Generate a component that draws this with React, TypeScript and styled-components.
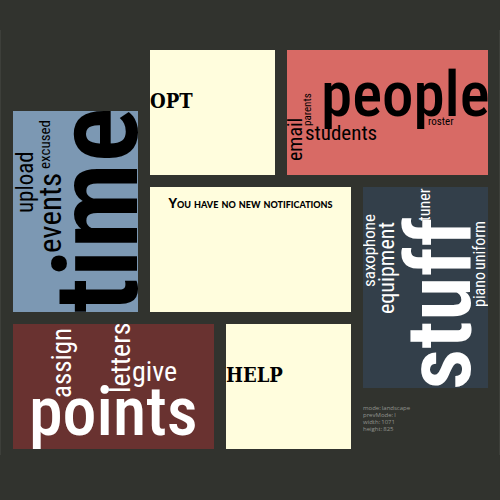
import React from 'react';
import styled, { createGlobalStyle } from 'styled-components';

const GlobalStyle = createGlobalStyle`
  *, *::before, *::after { box-sizing: border-box; }
  body {
    margin: 0;
    background: #31332e;
    color: #000;
  }
`;

const Page = styled.div`
  min-height: 100vh;
  padding: 30px 0 44px;
`;

const Board = styled.main`
  display: grid;
  grid-template-columns: 125fr 64fr 49fr 64fr 125fr;
  grid-template-rows:
    minmax(49px, auto) minmax(64px, auto) minmax(125px, auto)
    minmax(64px, auto) minmax(49px, auto);
  gap: 12px;
  padding: 20px 11px 6px 12px;
  border: solid #3d3f3a;
  border-width: 0 1px;
`;

const Cell = styled.div<{ $column: string; $row: string }>`
  grid-column: ${(p) => p.$column};
  grid-row: ${(p) => p.$row};
  min-width: 0;
`;

const CloudTile = styled(Cell)<{ $background: string; $ink: string }>`
  display: block;
  background: ${(p) => p.$background};
  fill: ${(p) => p.$ink};
  overflow: hidden;
`;

const Cloud = styled.svg`
  display: block;
  width: 100%;
  height: 100%;
  font-family: 'Roboto Condensed', 'Open Sans Condensed', 'Liberation Sans', sans-serif;
  font-variant-ligatures: none;
`;

const CloudWord = styled.text<{ $size: number; $weight: number }>`
  font-size: ${(p) => p.$size}px;
  font-weight: ${(p) => p.$weight};
`;

const NoteTile = styled(Cell)`
  display: flex;
  flex-direction: column;
  background: #fffddd;
  color: #000;
  font-family: 'DejaVu Serif Condensed', 'DejaVu Serif', serif;
  font-weight: 700;
  text-decoration: none;
`;

const NoteTitle = styled.span`
  margin-top: 39px;
  font-size: 20px;
  line-height: 24px;
`;

const Notice = styled.p`
  margin: 8px 0 0;
  font-family: Lato, 'Open Sans', sans-serif;
  font-weight: 900;
  font-size: 13px;
  line-height: 16px;
  text-align: center;
  font-variant-caps: small-caps;
`;

const Status = styled.dl`
  margin: 5px 0 0;
  color: #92938e;
  font-family: 'Open Sans', 'Noto Sans', sans-serif;
  font-size: 6px;
  line-height: 7px;
`;

const StatusLine = styled.div`
  display: flex;
  gap: 1px;

  dt, dd { margin: 0; }
`;

type Word = {
  text: string;
  x: number;
  y: number;
  size: number;
  weight?: number;
  upright?: boolean;
};

type CloudSpec = {
  name: string;
  column: string;
  row: string;
  width: number;
  height: number;
  background: string;
  ink: string;
  words: Word[];
};

const clouds: CloudSpec[] = [
  {
    name: 'time', column: '1', row: '2 / 4', width: 125, height: 201,
    background: '#7c98b3', ink: '#000',
    words: [
      { text: 'time', x: 124, y: 202, size: 116, weight: 600 },
      { text: 'upload', x: 20, y: 102, size: 23 },
      { text: 'events', x: 48, y: 142, size: 31 },
      { text: 'excused', x: 37, y: 58, size: 15 },
    ],
  },
  {
    name: 'people', column: '4 / 6', row: '1 / 3', width: 201, height: 125,
    background: '#d86a65', ink: '#000',
    words: [
      { text: 'people', x: 34, y: 66, size: 63, weight: 500, upright: true },
      { text: 'students', x: 18, y: 90, size: 21, upright: true },
      { text: 'roster', x: 141, y: 75, size: 11, upright: true },
      { text: 'email', x: 15, y: 111, size: 20 },
      { text: 'parents', x: 24, y: 76, size: 11 },
    ],
  },
  {
    name: 'stuff', column: '5', row: '3 / 5', width: 125, height: 201,
    background: '#333f4a', ink: '#fff',
    words: [
      { text: 'stuff', x: 107, y: 203, size: 91, weight: 600 },
      { text: 'tuner', x: 67, y: 34, size: 16 },
      { text: 'saxophone', x: 12, y: 100, size: 17 },
      { text: 'equipment', x: 31, y: 127, size: 22 },
      { text: 'piano', x: 122, y: 120, size: 16 },
      { text: 'uniform', x: 122, y: 83, size: 16 },
    ],
  },
  {
    name: 'points', column: '1 / 3', row: '4 / 6', width: 201, height: 125,
    background: '#693230', ink: '#fff',
    words: [
      { text: 'points', x: 16, y: 111, size: 68, weight: 500, upright: true },
      { text: 'assign', x: 58, y: 74, size: 27 },
      { text: 'letters', x: 117, y: 69, size: 28 },
      { text: 'give', x: 119, y: 57, size: 28, upright: true },
    ],
  },
];

const status = [
  ['mode:', 'landscape'],
  ['prevMode:', 'l'],
  ['width:', '1071'],
  ['height:', '825'],
];

function WordCloud({ spec }: { spec: CloudSpec }) {
  return (
    <CloudTile
      as="a"
      href={`#${spec.name}`}
      $column={spec.column}
      $row={spec.row}
      $background={spec.background}
      $ink={spec.ink}
    >
      <Cloud viewBox={`0 0 ${spec.width} ${spec.height}`}>
        {spec.words.map((word) => (
          <CloudWord
            key={word.text}
            $size={word.size}
            $weight={word.weight ?? 400}
            transform={`translate(${word.x} ${word.y})${word.upright ? '' : ' rotate(-90)'}`}
          >
            {word.text}
          </CloudWord>
        ))}
      </Cloud>
    </CloudTile>
  );
}

export default function App() {
  return (
    <>
      <GlobalStyle />
      <Page>
        <Board>
          {clouds.map((spec) => (
            <WordCloud key={spec.name} spec={spec} />
          ))}
          <NoteTile as="a" href="#opt" $column="2 / 4" $row="1 / 3">
            <NoteTitle>OPT</NoteTitle>
          </NoteTile>
          <NoteTile $column="2 / 5" $row="3">
            <Notice>You have no new notifications</Notice>
          </NoteTile>
          <NoteTile as="a" href="#help" $column="3 / 5" $row="4 / 6">
            <NoteTitle>HELP</NoteTitle>
          </NoteTile>
          <Cell $column="5" $row="5">
            <Status>
              {status.map(([label, value]) => (
                <StatusLine key={label}>
                  <dt>{label}</dt>
                  <dd>{value}</dd>
                </StatusLine>
              ))}
            </Status>
          </Cell>
        </Board>
      </Page>
    </>
  );
}
